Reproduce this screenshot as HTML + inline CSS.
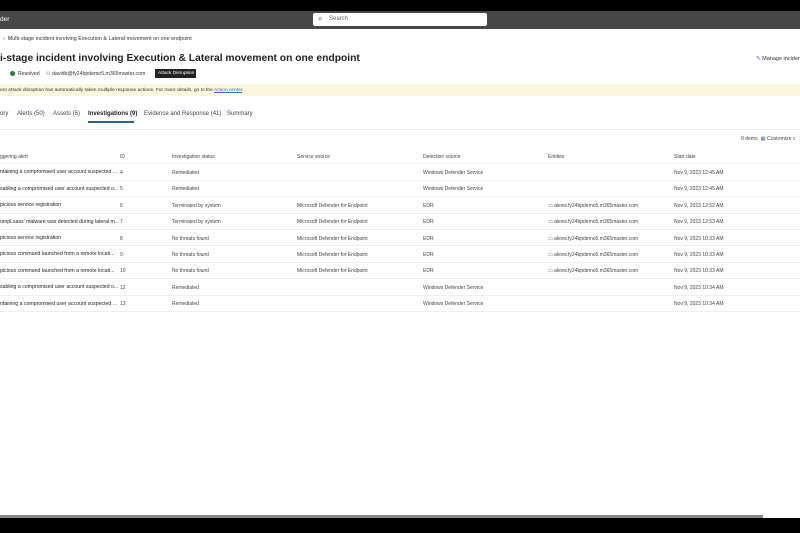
<!DOCTYPE html>
<html><head><meta charset="utf-8"><style>
*{margin:0;padding:0;box-sizing:border-box}
body{width:800px;height:533px;overflow:hidden;background:#fff;font-family:"Liberation Sans",sans-serif;color:#222;position:relative}
.a{position:absolute;white-space:nowrap}
.top{position:absolute;left:0;top:0;width:800px;height:11px;background:#000}
.hdr{position:absolute;left:0;top:11px;width:800px;height:18px;background:#474747}
.search{position:absolute;left:313px;top:13px;width:174px;height:13px;background:#fff;border-radius:2px;font-size:6px;color:#666;padding:3px 0 0 16px}
.row{position:absolute;left:0;width:800px;height:16.4px;border-bottom:1px solid #eee;font-size:5px;color:#444}
.row span{position:absolute;top:5.5px}
.row .t{font-size:5.2px;color:#222;top:5px}
.bot{position:absolute;left:0;top:518px;width:800px;height:15px;background:#000}
.sb{position:absolute;left:0;top:515px;width:763px;height:3px;background:#888}
</style></head><body>
<div class="top"></div>
<div class="hdr"><span class="a" style="left:0;top:5px;font-size:6.5px;color:#fff">der</span></div>
<div class="search"><span style="position:absolute;left:5px;top:1px;font-size:8px;color:#555">⌕</span>Search</div>
<div class="a" style="left:3px;top:36px;font-size:5.4px;color:#333">›&nbsp; Multi-stage incident involving Execution &amp; Lateral movement on one endpoint</div>
<div class="a" style="left:0;top:53px;font-size:10.3px;font-weight:bold;color:#222">i-stage incident involving Execution &amp; Lateral movement on one endpoint</div>
<div class="a" style="left:10px;top:71px;width:5px;height:5px;border-radius:50%;background:#2e7d32"></div>
<div class="a" style="left:18px;top:71px;font-size:5.2px;color:#333">Resolved</div>
<div class="a" style="left:46px;top:71px;font-size:5.2px;color:#333">⚇ davidb@fy24bpdemo5.m365master.com</div>
<div class="a" style="left:155px;top:69px;width:41px;height:9px;background:#222;color:#fff;font-size:4.8px;padding:2px 0 0 3px">Attack Disruption</div>
<div class="a" style="left:756px;top:56px;font-size:5.5px;color:#333"><span style="color:#5b6bb8">✎</span> Manage inciden</div>
<div class="a" style="left:0;top:84px;width:800px;height:12px;background:#fcf6dc;font-size:4.9px;color:#333;padding:3.5px 0 0 0">ent Attack disruption has automatically taken multiple response actions. For more details, go to the <span style="color:#3b6fb5;text-decoration:underline">Action center</span>.</div>
<div class="a" style="left:0;top:111px;font-size:6px;color:#444">ory</div>
<div class="a" style="left:17px;top:111px;font-size:6px;color:#444">Alerts (50)</div>
<div class="a" style="left:53px;top:111px;font-size:6px;color:#444">Assets (5)</div>
<div class="a" style="left:88px;top:111px;font-size:6px;color:#222;font-weight:bold">Investigations (9)</div>
<div class="a" style="left:88px;top:121px;width:46px;height:1.5px;background:#2f5f86"></div>
<div class="a" style="left:144px;top:111px;font-size:6px;color:#444">Evidence and Response (41)</div>
<div class="a" style="left:227px;top:111px;font-size:6px;color:#444">Summary</div>
<div class="a" style="left:0;top:129px;width:800px;height:1px;background:#eee"></div>
<div class="a" style="left:741px;top:136px;font-size:5.2px;color:#444">9 items &nbsp;<span style="color:#3b6fb5">▦</span> Customize c</div>
<div class="row" style="top:148px"><span>ggering alert</span><span style="left:120px">ID</span><span style="left:172px">Investigation status</span><span style="left:297px">Service source</span><span style="left:423px">Detection source</span><span style="left:548px">Entities</span><span style="left:674px">Start date</span></div>
<div class="row" style="top:164.4px"><span class="t">ntaining a compromised user account suspected ...</span><span style="left:120px">4</span><span style="left:172px">Remediated</span><span style="left:423px">Windows Defender Service</span><span style="left:674px">Nov 9, 2023 12:45 AM</span></div>
<div class="row" style="top:180.8px"><span class="t">sabling a compromised user account suspected o...</span><span style="left:120px">5</span><span style="left:172px">Remediated</span><span style="left:423px">Windows Defender Service</span><span style="left:674px">Nov 9, 2023 12:45 AM</span></div>
<div class="row" style="top:197.2px"><span class="t">picious service registration</span><span style="left:120px">6</span><span style="left:172px">Terminated by system</span><span style="left:297px">Microsoft Defender for Endpoint</span><span style="left:423px">EDR</span><span style="left:548px">▭ alexw.fy24bpdemo5.m365master.com</span><span style="left:674px">Nov 9, 2023 12:52 AM</span></div>
<div class="row" style="top:213.6px"><span class="t">umpLsass' malware was detected during lateral m...</span><span style="left:120px">7</span><span style="left:172px">Terminated by system</span><span style="left:297px">Microsoft Defender for Endpoint</span><span style="left:423px">EDR</span><span style="left:548px">▭ alexw.fy24bpdemo5.m365master.com</span><span style="left:674px">Nov 9, 2023 12:53 AM</span></div>
<div class="row" style="top:230px"><span class="t">picious service registration</span><span style="left:120px">8</span><span style="left:172px">No threats found</span><span style="left:297px">Microsoft Defender for Endpoint</span><span style="left:423px">EDR</span><span style="left:548px">▭ alexw.fy24bpdemo5.m365master.com</span><span style="left:674px">Nov 9, 2023 10:33 AM</span></div>
<div class="row" style="top:246.4px"><span class="t">picious command launched from a remote locati...</span><span style="left:120px">9</span><span style="left:172px">No threats found</span><span style="left:297px">Microsoft Defender for Endpoint</span><span style="left:423px">EDR</span><span style="left:548px">▭ alexw.fy24bpdemo5.m365master.com</span><span style="left:674px">Nov 9, 2023 10:33 AM</span></div>
<div class="row" style="top:262.8px"><span class="t">picious command launched from a remote locati...</span><span style="left:120px">10</span><span style="left:172px">No threats found</span><span style="left:297px">Microsoft Defender for Endpoint</span><span style="left:423px">EDR</span><span style="left:548px">▭ alexw.fy24bpdemo5.m365master.com</span><span style="left:674px">Nov 9, 2023 10:33 AM</span></div>
<div class="row" style="top:279.2px"><span class="t">sabling a compromised user account suspected o...</span><span style="left:120px">12</span><span style="left:172px">Remediated</span><span style="left:423px">Windows Defender Service</span><span style="left:674px">Nov 9, 2023 10:34 AM</span></div>
<div class="row" style="top:295.6px"><span class="t">ntaining a compromised user account suspected ...</span><span style="left:120px">13</span><span style="left:172px">Remediated</span><span style="left:423px">Windows Defender Service</span><span style="left:674px">Nov 9, 2023 10:34 AM</span></div>
<div class="sb"></div>
<div class="bot"></div>
</body></html>
